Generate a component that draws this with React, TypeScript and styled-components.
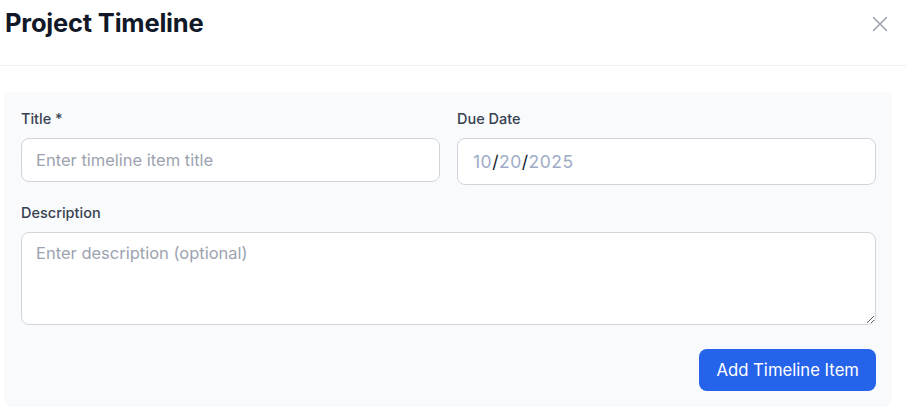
import React from "react";
import styled, { createGlobalStyle } from "styled-components";

const GlobalStyle = createGlobalStyle`
  * {
    box-sizing: border-box;
  }
  body {
    margin: 0;
    background: #ffffff;
    font-family: Inter, "Noto Sans", "Liberation Sans", sans-serif;
    color: #111827;
  }
`;

const Modal = styled.div`
  width: 906px;
  height: 418px;
  background: #ffffff;
  overflow: hidden;
`;

const Header = styled.div`
  display: flex;
  align-items: flex-start;
  justify-content: space-between;
  height: 66px;
  padding: 6px 14px 0 5px;
  border-bottom: 1px solid #f0f1f3;
`;

const Heading = styled.h2`
  margin: 0;
  font-size: 25.5px;
  line-height: 34px;
  font-weight: 700;
  color: #111827;
  letter-spacing: -0.2px;
`;

const CloseButton = styled.button`
  display: flex;
  align-items: center;
  justify-content: center;
  width: 24px;
  height: 24px;
  margin-top: 6px;
  padding: 0;
  border: none;
  background: none;
  color: #9ca3af;
  cursor: pointer;
`;

const Body = styled.div`
  padding: 26px 14px 0 4px;
`;

const Panel = styled.form`
  display: flex;
  flex-direction: column;
  padding: 16px 16px 16px 17px;
  border-radius: 8px;
  background: #f9fafb;
`;

const Row = styled.div`
  display: grid;
  grid-template-columns: 1fr 1fr;
  column-gap: 17px;
  margin-bottom: 17px;
`;

const Field = styled.div`
  display: flex;
  flex-direction: column;
`;

const Label = styled.label`
  display: block;
  margin-bottom: 9px;
  font-size: 14.5px;
  line-height: 21px;
  font-weight: 500;
  color: #374151;
`;

const TextInput = styled.input`
  width: 100%;
  height: 44px;
  padding: 0 14px;
  border: 1px solid #d1d5db;
  border-radius: 8px;
  background: #ffffff;
  font-family: inherit;
  font-size: 16.5px;
  color: #111827;
  outline: none;

  &::placeholder {
    color: #9ca3af;
  }
`;

const DateBox = styled.div`
  display: flex;
  align-items: center;
  height: 47px;
  padding: 0 15px;
  border: 1px solid #d1d5db;
  border-radius: 8px;
  background: #ffffff;
  font-size: 17.5px;
  letter-spacing: 0.5px;
`;

const DateSegment = styled.span`
  color: #9eacc6;
`;

const DateSeparator = styled.span`
  color: #111827;
`;

const TextArea = styled.textarea`
  width: 100%;
  height: 93px;
  padding: 10px 14px;
  border: 1px solid #d1d5db;
  border-radius: 8px;
  background: #ffffff;
  font-family: inherit;
  font-size: 16.5px;
  line-height: 21px;
  color: #111827;
  outline: none;

  &::placeholder {
    color: #9ca3af;
  }
`;

const Actions = styled.div`
  display: flex;
  justify-content: flex-end;
  margin-top: 24px;
`;

const PrimaryButton = styled.button`
  height: 42px;
  padding: 0 17px;
  border: none;
  border-radius: 8px;
  background: #2563eb;
  font-family: inherit;
  font-size: 16.7px;
  color: #ffffff;
  cursor: pointer;
`;

const CloseIcon = () => (
  <svg width="16" height="16" viewBox="0 0 16 16" fill="none">
    <path
      d="M1.5 1.5L14.5 14.5M14.5 1.5L1.5 14.5"
      stroke="currentColor"
      strokeWidth="1.6"
      strokeLinecap="round"
    />
  </svg>
);

const App = () => {
  return (
    <>
      <GlobalStyle />
      <Modal>
        <Header>
          <Heading>Project Timeline</Heading>
          <CloseButton type="button" aria-label="Close">
            <CloseIcon />
          </CloseButton>
        </Header>
        <Body>
          <Panel onSubmit={(e) => e.preventDefault()}>
            <Row>
              <Field>
                <Label htmlFor="item-title">Title *</Label>
                <TextInput
                  id="item-title"
                  placeholder="Enter timeline item title"
                />
              </Field>
              <Field>
                <Label>Due Date</Label>
                <DateBox>
                  <DateSegment>10</DateSegment>
                  <DateSeparator>/</DateSeparator>
                  <DateSegment>20</DateSegment>
                  <DateSeparator>/</DateSeparator>
                  <DateSegment>2025</DateSegment>
                </DateBox>
              </Field>
            </Row>
            <Field>
              <Label htmlFor="item-description">Description</Label>
              <TextArea
                id="item-description"
                placeholder="Enter description (optional)"
              />
            </Field>
            <Actions>
              <PrimaryButton type="submit">Add Timeline Item</PrimaryButton>
            </Actions>
          </Panel>
        </Body>
      </Modal>
    </>
  );
};

export default App;
